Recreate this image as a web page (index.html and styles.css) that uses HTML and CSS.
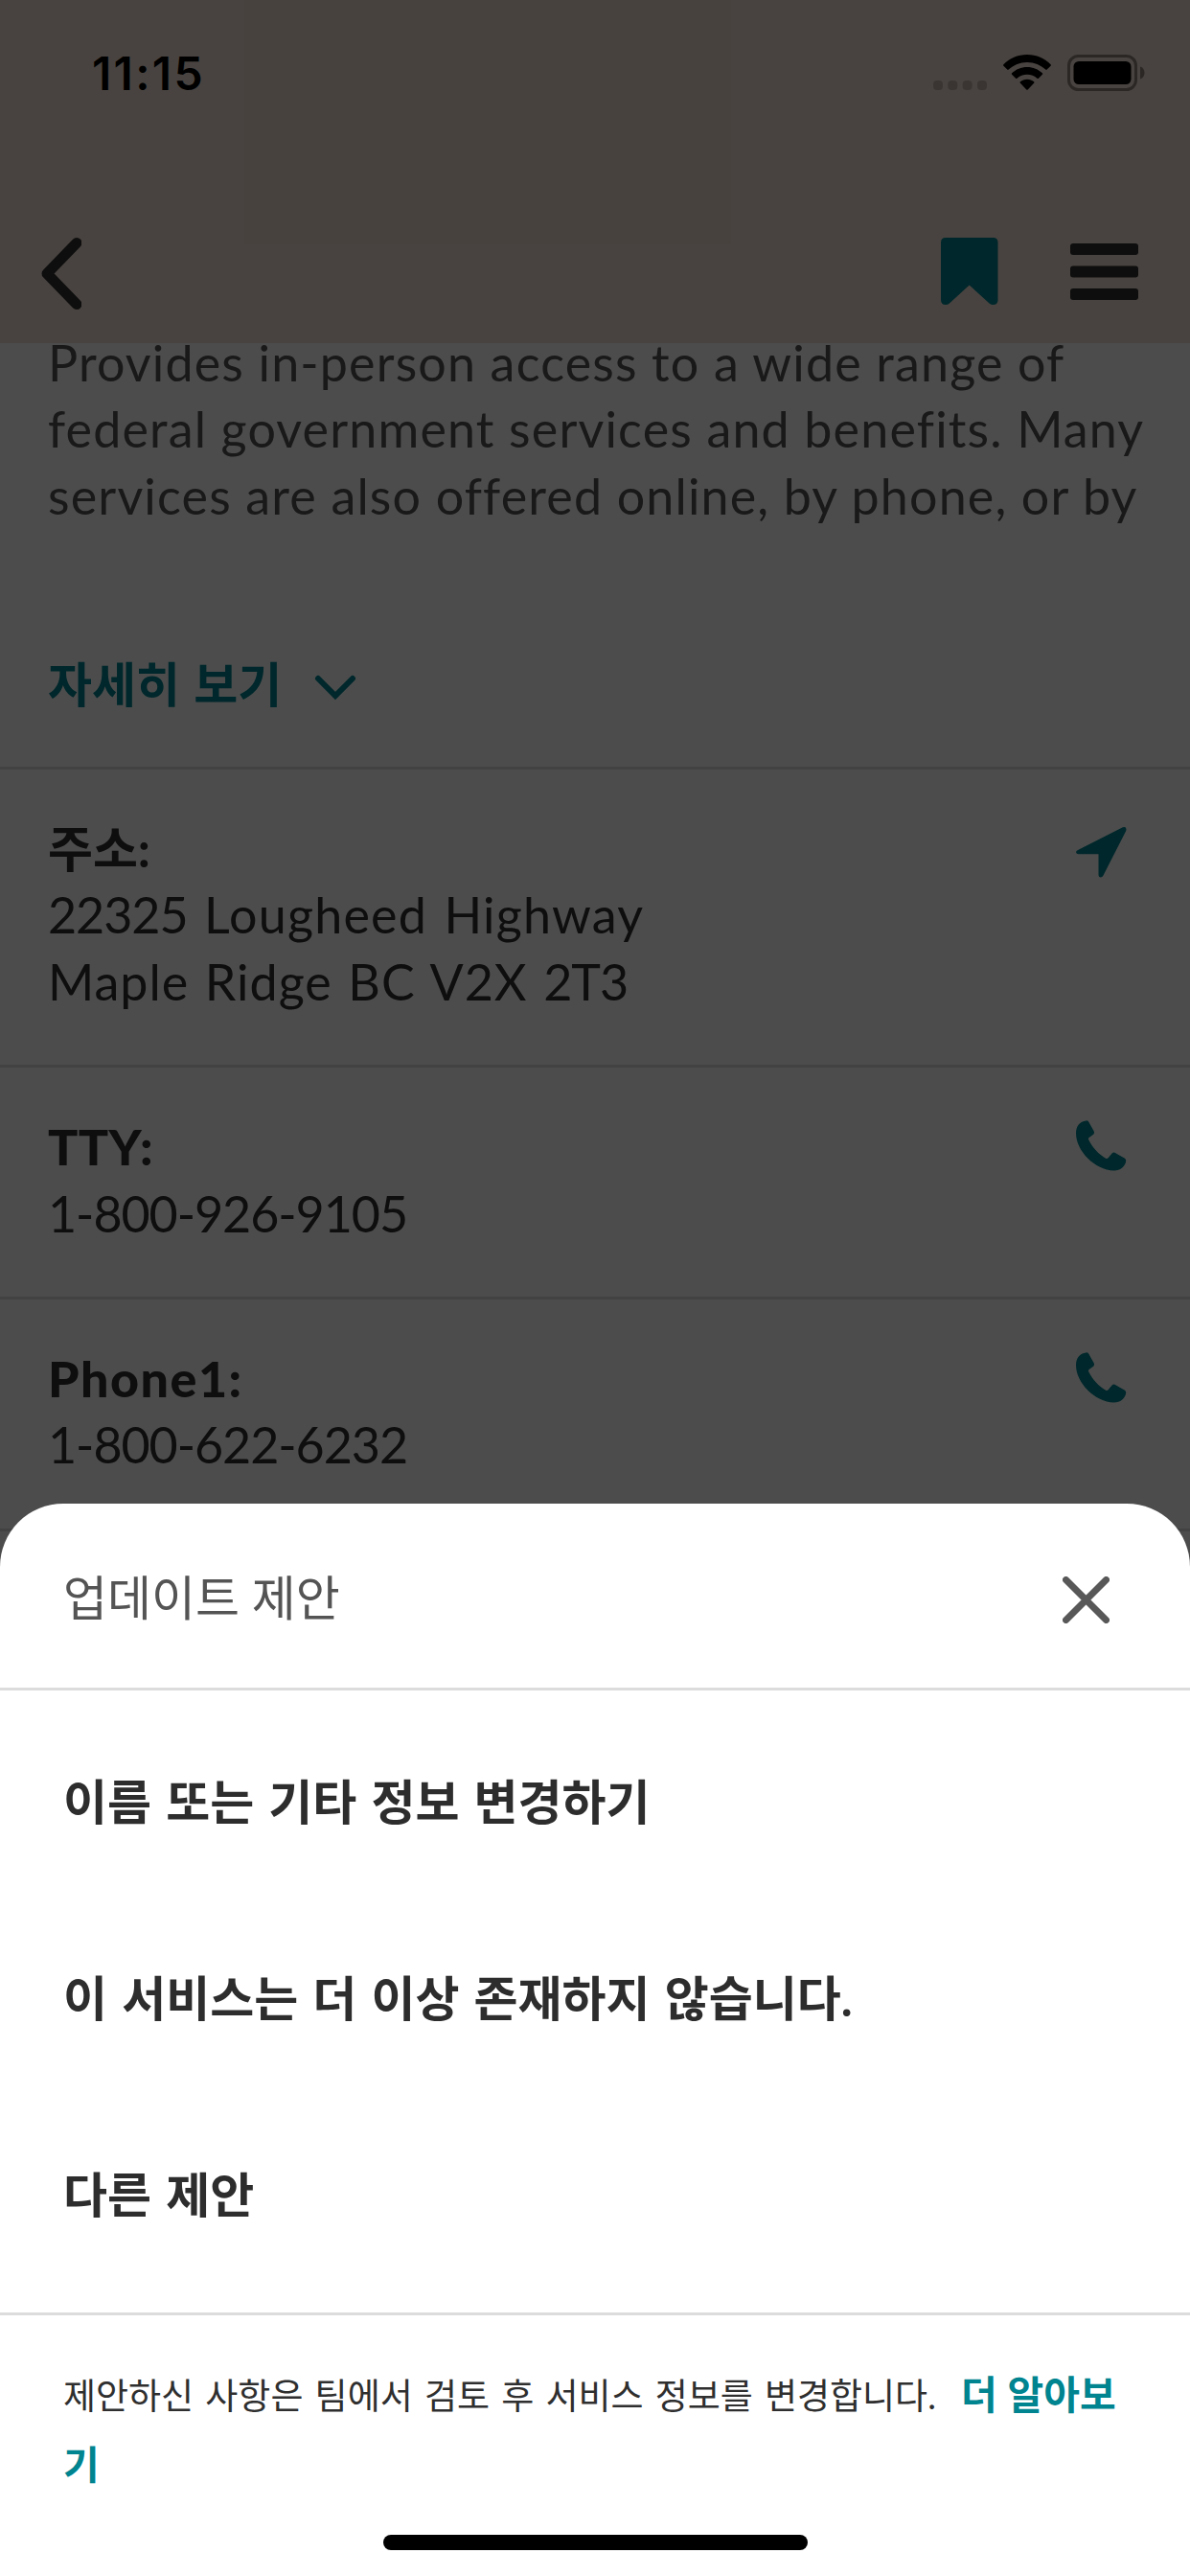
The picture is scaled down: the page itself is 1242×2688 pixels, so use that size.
FILE: index.html
```html
<!DOCTYPE html>
<html lang="ko">
<head>
<meta charset="utf-8">
<title>업데이트 제안</title>
<link rel="stylesheet" href="styles.css">
</head>
<body>
<div class="screen">
  <div class="page">
    <header class="top">
      <div class="status">
        <span class="clock">11:15</span>
        <div class="signals">
          <svg class="dots" width="56" height="10" viewBox="0 0 56 10"><rect width="10" height="10" rx="4"/><rect x="15.3" width="10" height="10" rx="4"/><rect x="30.6" width="10" height="10" rx="4"/><rect x="46" width="10" height="10" rx="4"/></svg>
          <svg class="wifi" width="50" height="37" viewBox="0 0 50 37"><path d="M25 0C34.800 0 43.600 3.900 49.600 10.200Q50.300 11 49.600 11.700L45.700 15.600Q45 16.200 44.300 15.600C39.300 10.800 32.500 7.900 25 7.900S10.700 10.800 5.700 15.600Q5 16.200 4.300 15.600L.4 11.700Q-.3 11 .4 10.200C6.400 3.900 15.200 0 25 0z"/><path d="M25 12.900C31.200 12.900 36.700 15.300 40.900 19.200Q41.600 20 40.900 20.700L36.900 24.700Q36.200 25.300 35.500 24.700C32.700 22.200 29 20.700 25 20.700S17.300 22.200 14.500 24.700Q13.800 25.300 13.100 24.700L9.100 20.700Q8.400 20 9.100 19.200C13.300 15.300 18.800 12.900 25 12.900z"/><path d="M25 25.700C27.700 25.700 30.200 26.700 32.100 28.300Q32.800 29 32.100 29.700L25.700 36.500Q25 37.100 24.300 36.500L17.900 29.700Q17.200 29 17.900 28.300C19.800 26.700 22.300 25.700 25 25.700z"/></svg>
          <svg class="battery" width="81" height="38" viewBox="0 0 81 38"><rect class="shell" x="1.500" y="1.500" width="70" height="35" rx="10"/><rect x="6.500" y="7" width="60" height="24" rx="5.500"/><path class="cap" d="M76 12.500C82 14.500 82 23.500 76 25.500z"/></svg>
        </div>
      </div>
      <nav class="bar">
        <svg width="42" height="75" viewBox="0 0 42 75"><path class="back" d="M37 5.500L6 37.500L37 69.500"/></svg>
        <div class="actions">
          <svg class="mark" width="60" height="70" viewBox="0 0 60 70"><path d="M5 0H54.500Q59.500 0 59.500 5V65Q59.500 70 54.500 70Q52.500 70 50.500 68.500L29.700 49.500L9 68.500Q7 70 5 70Q0 70 0 65V5Q0 0 5 0z"/></svg>
          <svg class="menu" width="71" height="59" viewBox="0 0 71 59"><rect width="71" height="12" rx="3"/><rect y="23.500" width="71" height="12" rx="3"/><rect y="47" width="71" height="12" rx="3"/></svg>
        </div>
      </nav>
    </header>
    <main>
      <section class="about">
        <p class="summary">Provides in-person access to a wide range of<br>federal government services and benefits. Many<br>services are also offered online, by phone, or by</p>
        <div class="more"><span>자세히 보기</span><svg width="44" height="27" viewBox="0 0 44 27"><path d="M4 4L22 22L40 4"/></svg></div>
      </section>
      <section class="entry">
        <div><h2 class="k-label">주소:</h2><p class="street"><span class="num">22325</span> Lougheed Highway</p><p class="city">Maple Ridge BC V2X <span class="num">2T3</span></p></div>
        <svg class="glyph arrow" width="54" height="54" viewBox="0 0 54 54"><path d="M48.800.2Q53.500-.8 52.200 4L28.500 50.500Q27.500 52.500 25.800 52.500Q23.500 52.500 23.500 49.500V28.300H2.500Q.3 28.300 0 26.300Q0 24.800 2 24z"/></svg>
      </section>
      <section class="entry">
        <div><h2 class="tty">TTY:</h2><p class="num">1-800-926-9105</p></div>
        <svg class="glyph" width="54" height="54" viewBox="0 0 54 54"><path d="M10.500.4Q12.300.1 13.300 1.800L18.800 11.600Q19.600 13.300 18.200 14.800L13.300 18.300Q12.700 19.300 13.300 20.600C17.500 29 24 36 31.500 40Q32.800 40.300 33.600 39.300L37.800 34.200Q39 33 40.500 33.800L51 39.700Q52.500 40.700 52.200 42.500C51.300 48.500 46 52.600 39.500 52.500C20 52 0 32 0 13.500C0 6 4 1.200 10.500.4z"/></svg>
      </section>
      <section class="entry">
        <div><h2>Phone1:</h2><p class="num">1-800-622-6232</p></div>
        <svg class="glyph" width="54" height="54" viewBox="0 0 54 54"><path d="M10.500.4Q12.300.1 13.300 1.800L18.800 11.600Q19.600 13.300 18.200 14.800L13.300 18.300Q12.700 19.300 13.300 20.600C17.500 29 24 36 31.500 40Q32.800 40.300 33.600 39.300L37.800 34.200Q39 33 40.500 33.800L51 39.700Q52.500 40.700 52.200 42.500C51.300 48.500 46 52.600 39.500 52.500C20 52 0 32 0 13.500C0 6 4 1.200 10.500.4z"/></svg>
      </section>
      <section class="entry"></section>
    </main>
  </div>
  <div class="dim"></div>
  <div class="sheet">
    <div class="sheet-head">
      <span>업데이트 제안</span>
      <svg class="close" width="49" height="49" viewBox="0 0 49 49"><path d="M3.500 3.500L45.500 45.500M45.500 3.500L3.500 45.500"/></svg>
    </div>
    <div class="options">
      <div class="option"><span>이름 또는 기타 정보 변경하기</span></div>
      <div class="option"><span>이 서비스는 더 이상 존재하지 않습니다.</span></div>
      <div class="option"><span>다른 제안</span></div>
    </div>
    <p class="note"><span>제안하신 사항은 팀에서 검토 후 서비스 정보를 변경합니다.</span><a class="link">더 알아보<br>기</a></p>
    <div class="home"></div>
  </div>
</div>
</body>
</html>
```
FILE: styles.css
```css
* { box-sizing: border-box; margin: 0; padding: 0; }
body { background: #fff; }
.screen {
  position: relative;
  width: 1242px;
  height: 2688px;
  overflow: hidden;
  font-family: Lato, "Noto Sans CJK KR", sans-serif;
  font-size: 52px;
  line-height: 69.4px;
  color: #2f2f2f;
}
svg { display: block; flex: none; }
span, p, h2 { white-space: nowrap; }

.page { height: 2688px; background: #fff; overflow: hidden; }
.top { height: 358px; background: #f0dfd5; }
.status { display: flex; justify-content: space-between; height: 132px; padding: 0 47px 0 96px; }
.clock {
  margin-top: 48px;
  font: 600 48px/58px Inter, sans-serif;
  letter-spacing: 2.3px;
  color: #000;
}
.signals { display: flex; align-items: flex-start; padding-top: 57px; }
.dots { margin: 27px 17px 0 0; fill: #c1b3ab; }
.battery { margin-left: 17px; }
.battery .shell { fill: none; stroke: #8c827c; stroke-width: 3; }
.battery .cap { fill: #8c827c; }
.bar { display: flex; justify-content: space-between; padding: 116px 54px 0 43px; }
.back { fill: none; stroke: #2f2f2f; stroke-width: 11; stroke-linecap: round; stroke-linejoin: round; }
.actions { display: flex; gap: 75px; }
.mark { fill: #00848f; }
.menu { margin-top: 6px; fill: #2f2f2f; }

.about { display: flow-root; height: 442px; padding-left: 50px; }
.summary { color: #545454; margin-top: -14px; letter-spacing: 1.16px; }
.more { display: flex; align-items: center; margin-top: 128px; color: #00848f; font-weight: 700; font-size: 50px; word-spacing: 2px; }
.more svg { margin: 5px 0 0 34px; fill: none; stroke: #00848f; stroke-width: 6; stroke-linecap: round; stroke-linejoin: miter; }

.entry {
  display: flex;
  justify-content: space-between;
  align-items: flex-start;
  border-top: 3px solid #dcdcdc;
  padding: 48px 65px 52px 50px;
  letter-spacing: 1px;
}
.entry h2 { font-size: 52px; font-weight: 900; line-height: 69.4px; height: 69.4px; letter-spacing: 1.5px; }
.entry h2.k-label { font-size: 51px; font-weight: 700; letter-spacing: 0; }
.entry h2.tty { letter-spacing: .4px; }
.entry .num { letter-spacing: -1.05px; }
.entry .street { letter-spacing: 1.2px; word-spacing: 3px; }
.entry .city { word-spacing: 2.3px; }
.glyph { margin-top: 7px; fill: #00848f; }
.glyph.arrow { margin-top: 12px; }

.dim { position: absolute; inset: 0; background: rgba(0, 0, 0, .7); }

.sheet {
  position: absolute;
  left: 0;
  right: 0;
  bottom: 0;
  height: 1119px;
  background: #fff;
  border-radius: 66px 66px 0 0;
}
.sheet-head {
  display: flex;
  justify-content: space-between;
  align-items: center;
  height: 195px;
  padding: 6px 84px 0 66px;
  border-bottom: 3px solid #dcdcdc;
  color: #545454;
  font-size: 50px;
}
.close { margin-top: 3px; fill: none; stroke: #585858; stroke-width: 7; stroke-linecap: round; }
.options { height: 652px; padding: 14px 0 0 66px; border-bottom: 3px solid #dcdcdc; }
.option { display: flex; align-items: center; height: 205px; font-weight: 700; font-size: 50px; word-spacing: 3px; color: #2d2d2d; }
.note { padding: 47px 0 0 66px; font-size: 37px; line-height: 73px; word-spacing: 2.7px; }
.link { margin-left: 26px; font-size: 41px; line-height: 1; word-spacing: 1px; font-weight: 700; color: #00848f; }
.home {
  position: absolute;
  left: 400px;
  bottom: 27px;
  width: 443px;
  height: 16px;
  border-radius: 8px;
  background: #000;
}
```
